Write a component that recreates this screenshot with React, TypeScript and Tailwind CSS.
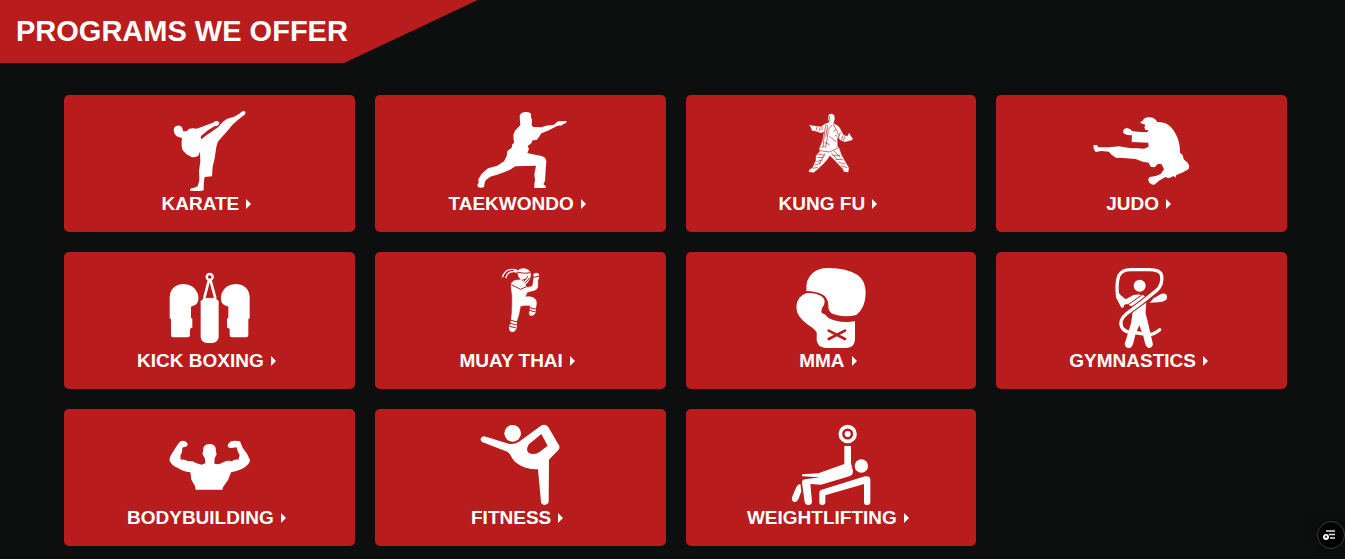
import type { ReactNode } from 'react';

type Program = { name: string; viewBox: string; art: ReactNode };

const RED = '#b91c1c';

const programs: Program[] = [
  {
    name: 'Karate',
    viewBox: '19 39 288 240',
    art: (
      <path d="M57 96 Q58 86 65 84 Q77 80 83 89 L85 99 Q90 101 96 99 L104 92 Q115 90 126 92 L154 82 L175 74 Q180 68 188 69 Q196 72 193 79 Q190 85 179 85 L160 97 L140 113 Q135 119 140 123 Q145 121 151 115 L178 96 L190 88 Q198 78 207 70 Q218 60 237 57 L254 47 Q261 38 269 39 Q275 43 270 50 L254 62 L235 79 L216 101 L192 128 Q187 134 185 147 L180 181 L174 206 L172 235 L150 237 Q147 252 147 264 L147 277 Q140 280 127 279 L107 278 Q103 275 110 271 Q122 269 129 265 L134 246 L133 219 L137 190 L136 161 L131 173 Q121 179 110 177 Q94 171 84 157 Q79 143 82 120 L72 117 Q62 114 59 106 Z" />
    ),
  },
  {
    name: 'Taekwondo',
    viewBox: '21 39 288 240',
    art: (
      <path d="M164 53 Q168 42 182 42 Q194 41 198 47 L198 57 L201 66 L200 81 L204 87 L229 88 L243 83 L267 80 L279 70 L303 69 Q306 71 303 75 L296 78 L287 83 Q279 82 272 86 L247 99 L229 106 L222 117 L215 126 L203 127 L199 136 L188 144 L192 153 L187 165 L196 167 L226 173 Q244 177 244 190 L242 216 L240 249 L235 259 L242 264 L242 270 L208 270 L208 258 L210 246 L208 229 L213 203 L181 204 L151 205 L135 215 L117 223 L96 230 L76 236 L62 247 L59 255 L57 267 Q48 272 39 267 L37 260 L41 253 L40 244 L50 227 L69 211 L97 203 L117 190 L125 174 L127 159 L140 149 L142 139 L147 135 L145 112 Q148 97 156 92 L166 81 L165 71 Z" />
    ),
  },
  {
    name: 'Kung Fu',
    viewBox: '-21 18 288 240',
    art: (
      <>
        <path
          d="M117 29 Q125 24 132 31 Q136 42 130 53 L132 57 Q144 61 149 69 L155 82 L162 92 L174 94 L177 85 Q181 91 183 95 L188 101 L185 105 L164 110 L150 104 L144 93 L141 103 L142 125 L147 130 L153 148 L165 170 L176 189 L174 201 L162 199 L158 190 Q145 178 137 168 L119 151 L113 161 L99 177 L82 193 L71 202 L57 200 L59 194 L68 189 L78 167 L79 152 L90 139 L89 130 L98 108 L103 79 L93 83 L77 78 L66 76 L64 68 L59 61 L76 64 L93 66 L104 58 L119 52 Q113 43 117 29 Z"
          stroke="white"
          strokeWidth="1.5"
        />
        <g fill="none" stroke={RED} strokeWidth="2">
          <path d="M118 33 L120 49 M81 66 L78 76 M91 67 L87 78 M98 65 L95 76 M108 57 L104 80 L99 125 M113 61 L107 95 M126 60 L115 73 L111 105 L106 129 M129 57 L142 79 L146 92 M130 80 L138 74 M135 91 L142 94 M118 94 L138 110 M103 112 L119 119 M94 128 L104 123 M90 137 L118 141 L145 129" />
          <path d="M84 147 L104 151 M83 158 L101 157 M79 170 L97 165 M75 181 L93 173 M69 190 L83 187 M105 145 L88 177 M124 144 L142 164 M133 138 L151 158 M128 151 L151 151 M137 163 L159 164 M145 172 L166 177 M153 182 L172 188 M151 82 L146 98 M158 92 L155 105 M165 94 L160 108" />
        </g>
      </>
    ),
  },
  {
    name: 'Judo',
    viewBox: '26 18 288 240',
    art: (
      <path d="M165 51 L172 47 Q176 38 189 37 Q203 36 211 44 L216 51 Q237 51 248 59 Q264 70 273 91 Q284 112 284 143 L292 150 L295 163 L307 173 L312 183 L309 193 L293 202 L273 210 L270 218 L265 213 L250 220 L240 216 L221 227 L207 239 Q199 241 193 234 L188 224 L193 216 Q212 215 226 207 L236 193 L229 178 L218 176 L208 187 L196 185 L190 173 L172 170 L151 162 L112 159 L91 158 L77 148 L71 140 L48 138 L31 141 Q23 133 24 121 L35 120 L39 127 L72 127 L101 124 L137 130 L158 130 L176 131 L190 125 L189 113 L139 111 L140 91 L126 90 L114 85 L114 74 L124 68 L135 73 L140 78 L157 80 L185 82 L190 76 L180 75 L177 67 L180 59 L167 55 Z" />
    ),
  },
  {
    name: 'Kick Boxing',
    viewBox: '4 9 288 240',
    art: (
      <>
        <path d="M30 97 Q32 59 72 57 Q103 58 114 85 Q123 118 97 124 L94 125 L94 158 L98 161 L98 188 L91 191 L91 211 Q91 217 84 217 L41 217 Q34 217 34 210 L34 162 L30 160 Z" />
        <path d="M270 97 Q268 59 228 57 Q197 58 186 85 Q177 118 203 124 L206 125 L206 158 L202 161 L202 188 L210 191 L210 211 Q210 217 217 217 L259 217 Q266 217 266 210 L266 162 L270 160 Z" />
        <circle cx="150" cy="36" r="9" fill="none" stroke="white" strokeWidth="7" />
        <path d="M147 48 L134 99 M153 48 L167 99" fill="none" stroke="white" strokeWidth="8" />
        <path d="M133 98 H167 L177 109 V217 Q174 233 158 234 H142 Q126 233 123 217 V109 Z" />
        <path d="M138 98 H162" stroke={RED} strokeWidth="2" />
      </>
    ),
  },
  {
    name: 'Muay Thai',
    viewBox: '-54 24 288 240',
    art: (
      <>
        <path
          d="M83 35 Q87 25 104 26 Q120 29 122 42 L120 54 L112 68 L105 74 L111 83 L128 79 L132 52 L131 42 Q139 37 146 42 L146 55 L143 61 L143 80 Q142 88 133 91 L112 96 L105 111 Q126 107 137 119 Q142 127 136 147 L136 159 Q130 169 120 166 Q115 160 120 152 L121 136 L104 136 L91 138 L86 164 L80 183 L79 205 L74 213 Q65 219 59 211 L58 201 L63 187 L66 160 L67 128 Q68 105 64 84 Q60 65 77 61 L94 60 L86 50 Z"
          stroke="white"
          strokeWidth="2"
        />
        <path d="M83 32 Q64 24 49 33 Q39 42 37 52 M83 36 Q61 31 52 43 L47 55 M82 37 L71 31" fill="none" stroke="white" strokeWidth="4" />
        <path d="M82 37 Q106 42 122 38 M101 65 L114 48 M105 70 L118 54 M96 61 L108 57 M64 74 L92 88 L109 80 M130 52 L147 49 M118 143 L137 147 M118 151 L137 156 M63 181 L82 186 M60 190 L80 195 M59 199 L79 204" fill="none" stroke={RED} strokeWidth="3" />
      </>
    ),
  },
  {
    name: 'MMA',
    viewBox: '-6 24 288 240',
    art: (
      <>
        <path d="M64 93 Q61 58 83 39 Q102 23 132 24 Q184 24 218 45 Q242 62 242 98 Q242 141 214 165 Q177 173 147 163 Q129 157 130 137 Q130 111 109 102 Q92 94 64 93 Z" />
        <path d="M63 100 Q90 97 107 107 Q124 117 117 135 Q108 145 109 155 Q110 161 117 162 L121 164 Q130 177 153 182 Q177 189 210 184 L210 238 Q209 263 184 264 L120 264 Q98 261 95 241 L95 216 Q85 204 67 193 Q34 169 34 141 Q35 110 63 100 Z" />
        <path d="M131 212 L180 237 M131 237 L180 212" fill="none" stroke={RED} strokeWidth="8" strokeLinecap="round" />
      </>
    ),
  },
  {
    name: 'Gymnastics',
    viewBox: '-19 24 288 240',
    art: (
      <>
        <circle cx="118" cy="77" r="18" />
        <path d="M50 92 L63 107 L76 118 L98 106 Q112 101 129 106 L139 112 L135 160 L97 165 L97 140 L79 132 L64 138 L47 111 Z" />
        <path d="M148 128 L160 115 L178 104 Q188 98 196 102 Q203 108 198 119 Q190 126 174 127 Z" />
        <path d="M150 106 L131 122 L80 160 Q72 167 68 174" fill="none" stroke={RED} strokeWidth="17" />
        <path d="M76 139 L126 104" fill="none" stroke={RED} strokeWidth="3" />
        <path d="M66 138 L52 111 Q47 74 55 48 Q65 29 91 29 L145 29 Q181 29 184 47 Q188 74 168 92 L131 122 L80 160 Q55 181 64 201 Q72 218 102 218 L138 223 Q158 226 178 209" fill="none" stroke="white" strokeWidth="10" strokeLinecap="round" />
        <path
          fillRule="evenodd"
          d="M97 158 L134 131 L135 158 L141 180 L158 253 Q154 266 144 264 Q136 261 134 250 L128 224 L106 221 L98 252 Q94 265 85 264 Q74 263 73 251 L92 190 Z M117 196 L109 214 L124 216 Z"
        />
      </>
    ),
  },
  {
    name: 'Bodybuilding',
    viewBox: '4 -15 288 240',
    art: (
      <path d="M58 38 Q64 31 73 33 Q84 36 84 44 Q82 51 76 50 L68 53 L67 67 L62 77 L63 89 Q74 86 85 94 Q98 91 109 99 L126 104 L137 100 L136 86 L130 76 L128 70 L130 65 Q128 42 150 42 Q171 43 169 65 L171 73 L165 85 L164 101 L178 103 L191 97 Q205 90 216 94 Q223 87 236 89 L240 76 L234 64 L231 52 L216 54 Q207 55 204 49 Q205 40 214 34 Q226 30 241 34 L249 53 L262 71 L271 90 Q270 102 255 112 Q242 121 214 127 L205 150 L190 172 L188 179 H108 L106 168 L95 149 L92 127 Q68 124 55 114 Q36 107 30 92 Q28 83 39 67 L51 48 Z" />
    ),
  },
  {
    name: 'Fitness',
    viewBox: '6 30 288 240',
    art: (
      <>
        <circle cx="128" cy="55" r="25" />
        <path fillRule="evenodd" d="M43 64 L116 86 Q132 89 147 80 L212 33 Q222 26 232 33 L237 40 L268 93 Q270 99 265 105 L237 134 L236 262 Q233 270 224 270 Q214 269 213 261 L204 163 Q165 164 141 145 Q130 138 121 119 L112 110 L38 82 Q29 77 33 69 Q37 63 43 64 Z M214 57 L185 81 Q171 90 171 104 Q174 117 189 117 Q202 117 210 110 L233 92 Z" />
      </>
    ),
  },
  {
    name: 'Weightlifting',
    viewBox: '9 30 288 240',
    art: (
      <>
        <circle cx="203" cy="57" r="22" fill="none" stroke="white" strokeWidth="11" />
        <circle cx="203" cy="57" r="9" />
        <circle cx="244" cy="153" r="20" />
        <path d="M193 93 H213 V145 L219 169 Q219 181 208 184 L123 209 L91 207 L96 261 Q95 270 85 270 Q76 270 74 261 L66 204 Q65 194 76 193 L119 187 L66 184 L66 178 L115 175 L193 147 Z" />
        <path d="M61 207 L64 229 L55 253 Q50 263 40 260 Q34 256 36 247 L49 216 Q54 207 61 207 Z" />
        <path d="M118 264 V232 Q118 226 125 224 L255 184 Q271 181 271 195 V263 Q270 270 262 270 Q253 270 252 263 V207 L136 241 V264 Q134 270 127 270 Q119 270 118 264 Z" />
      </>
    ),
  },
];

function ProgramCard({ name, viewBox, art }: Program) {
  return (
    <a
      href="#"
      className="flex flex-col items-center rounded-[5px] bg-[#b91c1c] py-4 text-white"
    >
      <svg viewBox={viewBox} className="h-20 w-24 overflow-visible" fill="white" aria-hidden="true">
        {art}
      </svg>
      <span className="flex items-center text-[19px] leading-[25px] font-bold whitespace-nowrap uppercase">
        {name}
        <svg viewBox="0 0 5 10" className="mr-1.5 ml-[7px] h-[10px] w-[5px]" fill="white" aria-hidden="true">
          <path d="M0 0 L5 5 L0 10 Z" />
        </svg>
      </span>
    </a>
  );
}

export default function App() {
  return (
    <main className="min-h-screen bg-[#0d0f0e] font-['Liberation_Sans',Arial,sans-serif]">
      <header className="flex">
        <h1 className="bg-[#b91c1c] py-[11px] pr-[130px] pl-4 text-[29px] leading-[41px] font-bold whitespace-nowrap text-white uppercase [clip-path:polygon(0_0,100%_0,72%_100%,0_100%)]">
          Programs We Offer
        </h1>
      </header>
      <section className="grid grid-cols-4 gap-5 pt-8 pr-[58px] pb-3 pl-16">
        {programs.map((program) => (
          <ProgramCard key={program.name} {...program} />
        ))}
      </section>
      <button
        type="button"
        aria-label="Open menu"
        className="fixed right-0 bottom-[10px] flex size-7 items-center justify-center rounded-full border border-[#3d3d3d] bg-black shadow-[0_0_12px_rgba(0,0,0,0.6)]"
      >
        <svg viewBox="0 0 14 12" className="mr-1 h-3 w-[14px]" aria-hidden="true">
          <path d="M4 2 H13 M7 5.5 H13 M8 9 H13" stroke="#e5e5e5" strokeWidth="1.3" fill="none" />
          <circle cx="4" cy="8" r="3" fill="white" />
          <path d="M4 6.3 L5.5 8.5 H2.5 Z" fill="black" />
        </svg>
      </button>
    </main>
  );
}
